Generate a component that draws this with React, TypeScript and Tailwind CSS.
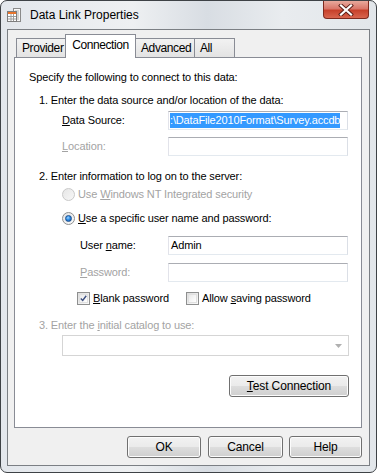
import type { ReactNode } from "react"

const font = "font-['Liberation_Sans',Arial,sans-serif]"

function WinButton({ children, className = "" }: { children: ReactNode; className?: string }) {
  return (
    <div
      className={`h-[22px] flex items-center justify-center rounded-[3px] border border-[#707070] bg-[linear-gradient(to_bottom,#f2f2f2_0%,#ebebeb_48%,#dddddd_52%,#cfcfcf_100%)] shadow-[inset_0_0_0_1px_#fcfcfc] text-[12px] text-black ${className}`}
    >
      {children}
    </div>
  )
}

function TextBox({ children }: { children?: ReactNode }) {
  return (
    <div className="w-[180px] h-[19px] flex items-center justify-start overflow-hidden border border-[#abadb3] border-b-[#e3e9ef] border-l-[#e2e3ea] border-r-[#dbdfe6] bg-white pl-px">
      {children}
    </div>
  )
}

function Radio({ checked, disabled }: { checked?: boolean; disabled?: boolean }) {
  return (
    <div
      className={`w-[13px] h-[13px] shrink-0 rounded-full border flex items-center justify-center ${
        disabled
          ? "border-[#c9c9c9] bg-[linear-gradient(135deg,#e6e6e6,#f7f7f7)]"
          : "border-[#8e8f8f] bg-[linear-gradient(135deg,#e2e3e4,#fbfbfb)]"
      }`}
    >
      {checked && (
        <div className="w-[7px] h-[7px] rounded-full bg-[radial-gradient(circle_at_40%_35%,#9fd3ff_0%,#2d8de6_45%,#0f4c9e_100%)] border border-[#1b4f8e]" />
      )}
    </div>
  )
}

function Check({ checked }: { checked?: boolean }) {
  return (
    <div className="w-[13px] h-[13px] shrink-0 border border-[#8e8f8f] bg-[linear-gradient(135deg,#dcdcdc,#fbfbfb)] p-px">
      <div className="w-full h-full border border-[#e0e0e0] bg-[linear-gradient(135deg,#e9e9e9,#ffffff)] flex items-center justify-center">
        {checked && (
          <svg width="9" height="9" viewBox="0 0 9 9">
            <path d="M1 4.5 L3.5 7 L8 1" fill="none" stroke="#3c4f80" strokeWidth="1.8" />
          </svg>
        )}
      </div>
    </div>
  )
}

function WindowIcon() {
  return (
    <svg width="16" height="16" viewBox="0 0 16 16">
      <rect x="7.5" y="1.5" width="7" height="13" fill="#f7f7f7" stroke="#8a8a8a" />
      <path d="M9 4h4M9 6h4M9 8h4M9 10h4M9 12h4" stroke="#b0b0b0" />
      <rect x="1.5" y="4.5" width="9" height="10" fill="#ffffff" stroke="#7d7d7d" />
      <rect x="2" y="5" width="8" height="2" fill="#e8742c" />
      <path d="M2 9.5h8M2 12h8M5 7v7M7.5 7v7" stroke="#9c9c9c" />
    </svg>
  )
}

function Tab({ label, selected, width }: { label: string; selected?: boolean; width: string }) {
  if (selected) {
    return (
      <div className={`${width} h-[24px] -ml-px relative z-20 bg-white border border-b-0 border-[#898c95] flex items-start justify-center pt-[4px] text-[12px] tracking-[-0.4px]`}>
        {label}
      </div>
    )
  }
  return (
    <div
      className={`${width} h-[19px] mb-px -ml-px first:ml-0 relative z-10 border border-b-0 border-[#898c95] bg-[linear-gradient(to_bottom,#f2f2f2,#e3e3e3)] flex items-center pl-[5px] pt-px text-[12px] tracking-[-0.4px]`}
    >
      {label}
    </div>
  )
}

export default function App() {
  return (
    <div className={`w-[377px] h-[473px] bg-[#ffffff] ${font}`}>
      <div className="w-[377px] h-[473px] rounded-[7px] border border-[#3e4246] bg-[linear-gradient(to_right,#e3e7ec_0%,#eef0f2_35%,#d8dde3_55%,#e9ecef_75%,#e2e6ea_100%)] flex flex-col">
        {/* title bar */}
        <div className="h-[28px] flex items-start justify-between">
          <div className="flex items-center h-[27px] pl-[5px] gap-[8px]">
            <WindowIcon />
            <span className="text-[12px] text-black">Data Link Properties</span>
          </div>
          <div className="mr-[7px] w-[46px] h-[18px] rounded-b-[4px] border border-t-0 border-[#7e2a1e] bg-[linear-gradient(to_bottom,#e8a99c_0%,#d9776a_45%,#c7412b_55%,#d8654e_100%)] flex items-center justify-center">
            <svg width="16" height="12" viewBox="0 0 16 12">
              <path d="M3 1.5 L13 10.5 M13 1.5 L3 10.5" stroke="#5a1e16" strokeWidth="4" strokeLinecap="square" />
              <path d="M3 1.5 L13 10.5 M13 1.5 L3 10.5" stroke="#ffffff" strokeWidth="2.2" strokeLinecap="square" />
            </svg>
          </div>
        </div>

        {/* client area */}
        <div className="ml-[6px] w-[363px] h-[437px] border border-[#7b7f84] bg-[#f0f0f0] flex flex-col text-[11px] leading-[13px] text-black tracking-[-0.12px]">
          <div className="pt-[4px] pl-[8px] flex items-end h-[28px] -mb-px">
            <Tab label="Provider" width="w-[50px]" />
            <Tab label="Connection" selected width="w-[71px]" />
            <Tab label="Advanced" width="w-[60px]" />
            <Tab label="All" width="w-[41px]" />
          </div>

          <div className="ml-[6px] w-[348px] h-[371px] border border-[#898c95] bg-white flex flex-col pt-[12px]">
            <div className="h-[14px] flex items-center pl-[14px]">Specify the following to connect to this data:</div>
            <div className="h-[14px] mt-[9px] flex items-center pl-[24px]">1. Enter the data source and/or location of the data:</div>

            <div className="h-[19px] mt-[4px] flex items-center pl-[47px]">
              <span className="w-[106px]">
                <u>D</u>ata Source:
              </span>
              <TextBox>
                <span className="bg-[#3399ff] text-white whitespace-nowrap leading-[15px] tracking-[-0.15px]">:\DataFile2010Format\Survey.accdb</span>
              </TextBox>
            </div>
            <div className="h-[19px] mt-[7px] flex items-center pl-[47px]">
              <span className="w-[106px] text-[#a3a3a3]">
                <u>L</u>ocation:
              </span>
              <TextBox />
            </div>

            <div className="h-[14px] mt-[13px] flex items-center pl-[24px]">2. Enter information to log on to the server:</div>
            <div className="h-[14px] mt-[4px] flex items-center pl-[47px] text-[#a3a3a3]">
              <Radio disabled />
              <span className="ml-[3px]">
                Use{" "}<u>W</u>indows NT Integrated security
              </span>
            </div>
            <div className="h-[14px] mt-[10px] flex items-center pl-[47px]">
              <Radio checked />
              <span className="ml-[3px]">
                <u>U</u>se a specific user name and password:
              </span>
            </div>

            <div className="h-[19px] mt-[11px] flex items-center pl-[65px]">
              <span className="w-[88px]">
                User{" "}<u>n</u>ame:
              </span>
              <TextBox>
                <span className="pl-px">Admin</span>
              </TextBox>
            </div>
            <div className="h-[19px] mt-[8px] flex items-center pl-[65px]">
              <span className="w-[88px] text-[#a3a3a3]">
                <u>P</u>assword:
              </span>
              <TextBox />
            </div>

            <div className="h-[14px] mt-[9px] flex items-center pl-[62px]">
              <Check checked />
              <span className="ml-[3px] w-[93px]">
                <u>B</u>lank password
              </span>
              <Check />
              <span className="ml-[3px]">
                Allow{" "}<u>s</u>aving password
              </span>
            </div>

            <div className="h-[14px] mt-[13px] flex items-center pl-[24px] text-[#a3a3a3] whitespace-pre">
              3. Enter the{" "}<u>i</u>nitial catalog to use:
            </div>
            <div className="mt-[3px] ml-[47px] w-[287px] h-[21px] border border-[#d5d5d5] bg-white flex items-center justify-end pr-[6px]">
              <svg width="7" height="4" viewBox="0 0 7 4">
                <path d="M0 0 H7 L3.5 4 Z" fill="#b0b0b0" />
              </svg>
            </div>

            <div className="mt-[19px] ml-[214px]">
              <WinButton className="w-[120px]">
                <span>
                  <u>T</u>est Connection
                </span>
              </WinButton>
            </div>
          </div>

          <div className="mt-[8px] flex pl-[119px]">
            <WinButton className="w-[74px]">OK</WinButton>
            <WinButton className="w-[75px] ml-[7px]">Cancel</WinButton>
            <WinButton className="w-[73px] ml-[6px]">Help</WinButton>
          </div>
        </div>
      </div>
    </div>
  )
}
